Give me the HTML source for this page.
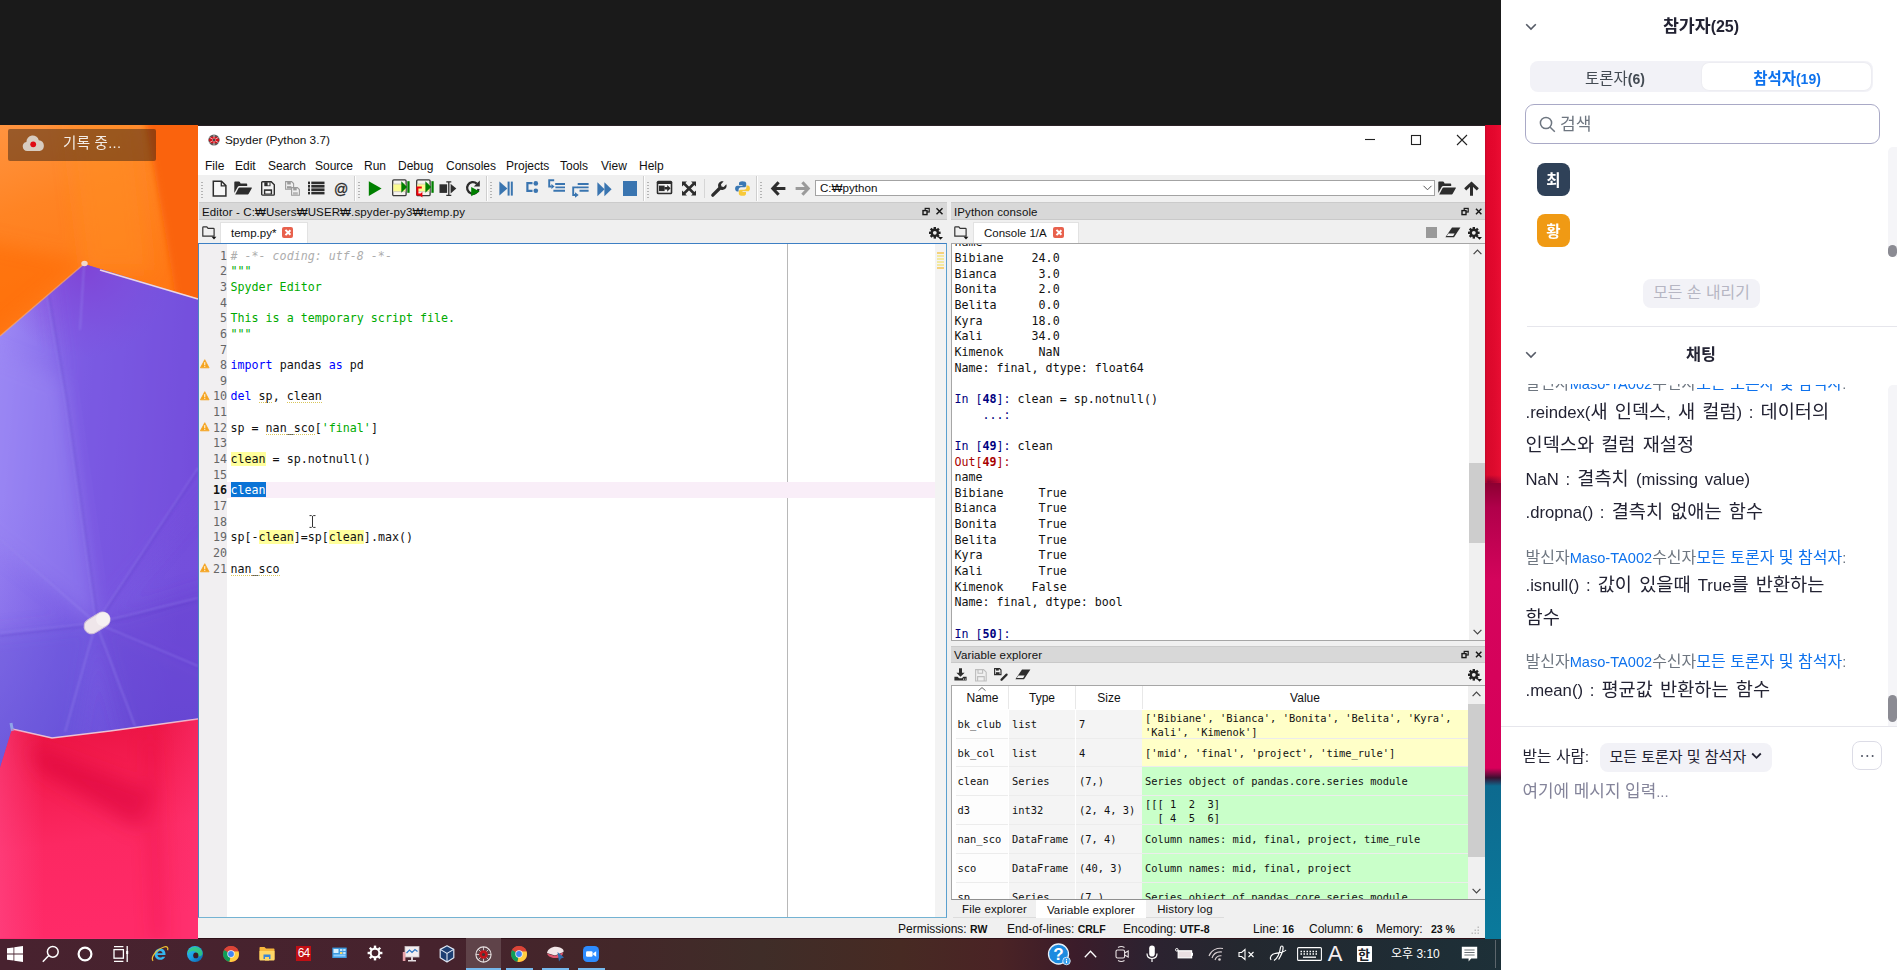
<!DOCTYPE html>
<html lang="ko">
<head>
<meta charset="utf-8">
<title>Spyder (Python 3.7)</title>
<style>
*{box-sizing:border-box;margin:0;padding:0}
html,body{width:1897px;height:970px;overflow:hidden;background:#fff}
body{position:relative;font-family:"Liberation Sans","Noto Sans CJK KR",sans-serif;font-size:12px;color:#111}
.abs{position:absolute}
#black{left:0;top:0;width:1501px;height:125px;background:#1a1a1a}
#desk{left:0;top:125px;width:1501px;height:814px;overflow:hidden;background:#e8134f}
#task{left:0;top:938px;width:1501px;height:32px;background:#42202b}
#spy{left:198px;top:125px;width:1287px;height:813px;border-top:1px solid #2b2226;background:#f0f0f0;overflow:hidden}
#zoom{left:1501px;top:0;width:396px;height:970px;background:#fff}
.mono{font-family:"DejaVu Sans Mono","Liberation Mono",monospace}

#spy .t{position:absolute;white-space:pre;line-height:1}
#titlebar{left:0;top:0;width:1287px;height:29px;background:#fff}
#menubar{left:0;top:29px;width:1287px;height:20px;background:#fff}
#menubar span{position:absolute;top:4px;font-size:12px;color:#111;line-height:14px}
#toolbar{left:0;top:49px;width:1287px;height:27px;background:#f0f0f0}
.hdl{position:absolute;top:6px;width:2px;height:17px;background-image:radial-gradient(circle,#b4b4b4 0.8px,transparent 1px);background-size:2px 3px}
.sep{position:absolute;top:1px;width:1px;height:25px;background:#cfcfcf;box-shadow:1px 0 0 #fff}
.ptitle{letter-spacing:.12px;position:absolute;height:18px;background:#d8d8d8;border-top:1px solid #cbcbcb;border-bottom:1px solid #c9c9c9;font-size:11.5px;line-height:18px;color:#111;white-space:pre;font-family:"Liberation Sans","NanumGothic","Noto Sans CJK KR",sans-serif}
.tabbar{position:absolute;height:23px;background:#f0f0f0}
.tab{position:absolute;top:2px;height:21px;background:#fff;border:1px solid #e2e2e2;border-bottom:none;font-size:11.5px;line-height:20px;white-space:pre;color:#111}
.cls{position:absolute;width:11px;height:11px;border-radius:2px;background:#e8614d}
.cls:before,.cls:after{content:"";position:absolute;left:5px;top:2px;width:1.6px;height:7px;background:#fff;transform:rotate(45deg)}
.cls:after{transform:rotate(-45deg)}
svg.i{position:absolute;overflow:visible}

#ed .ln{position:absolute;left:0;width:28px;text-align:right;font-size:11.67px;line-height:15.65px;color:#666;height:15.65px}
#ed .ln.cur{font-weight:bold;color:#111}
#ed .cl{position:absolute;left:31.5px;font-size:11.67px;line-height:15.65px;height:15.65px;white-space:pre;color:#111}
#ed i.cm{color:#adadad;font-style:italic}
#ed b{font-weight:normal}
#ed b.st{color:#00aa00}
#ed b.kw{color:#0000ff}
#ed u{text-decoration:none;background:linear-gradient(90deg,#d9c65a 50%,transparent 50%) 0 100%/2px 1px repeat-x}
#ed mark{background:#ffff9c;color:inherit}
#ed .sel{color:#fff}
#con .cc{position:absolute;left:2.400px;font-size:11.67px;line-height:15.65px;height:15.65px;white-space:pre;color:#111}
#con b{font-weight:normal}
#con b.ip{color:#000080}
#con b.op{color:#a80000}
#con b b{font-weight:bold}

#vt .vh{position:absolute;top:0;height:23px;line-height:25px;text-align:center;font-size:12px;color:#111}
#vt .vr{position:absolute;left:0;width:516px;height:28.83px}
#vt .vc{position:absolute;top:0;height:28.83px;line-height:28.83px;font-family:"DejaVu Sans Mono","Liberation Mono",monospace;font-size:10.4px;white-space:pre;padding-left:3px;color:#111;border-bottom:1px solid #ececec;overflow:hidden}
#vt .vc.two{line-height:14px;padding-top:1px}
.btab{position:absolute;height:16px;font-size:11.5px;line-height:16px;text-align:center;color:#111;white-space:pre;letter-spacing:.12px}
.btab.on{background:#fff;height:18px;line-height:20px}
#sb span{position:absolute;top:3px;font-size:12px;line-height:14px;white-space:pre;color:#111}
#sb b{font-size:10.500px;font-weight:bold}

#task svg{position:absolute;overflow:visible}
#task .ul{position:absolute;top:29.500px;height:2.500px;background:#76b9ed}

#zoom{font-family:"Liberation Sans","Noto Sans CJK KR",sans-serif;color:#232333}
#zoom .z{position:absolute;white-space:pre;line-height:1}
#zoom .hd{font-weight:bold;font-size:17.300px;color:#232333;text-align:center;width:200px}
#zoom .hd .la{font-size:16px}
#zoom .msg{font-size:18.640px;color:#232333;left:25.500px;word-spacing:2px;line-height:24px;height:24px}
#zoom .msg .la{font-size:16.700px}
#zoom .snd{font-size:16px;color:#6e7680;left:25.500px;line-height:20px;height:20px}
#zoom .snd .la{font-size:14.600px}
#zoom .snd b{font-weight:normal;color:#0e72ed}

</style>
</head>
<body>
<div id="black" class="abs"></div>
<div id="desk" class="abs"><svg class="abs" style="left:0;top:0" width="1501" height="814" viewBox="0 125 1501 814">
<defs>
<linearGradient id="gor" x1="0" y1="0" x2="0.300" y2="1"><stop offset="0" stop-color="#ff9440"/><stop offset="0.350" stop-color="#ff8424"/><stop offset="1" stop-color="#ff7410"/></linearGradient>
<linearGradient id="gpu" x1="0" y1="0" x2="1" y2="0.200"><stop offset="0" stop-color="#9e8af5"/><stop offset="0.450" stop-color="#8064e7"/><stop offset="1" stop-color="#744edb"/></linearGradient>
<linearGradient id="gpu2" x1="0" y1="0" x2="0" y2="1"><stop offset="0" stop-color="#7a5ae6" stop-opacity="0"/><stop offset="1" stop-color="#5a46d0" stop-opacity="0.550"/></linearGradient>
<radialGradient id="gvi" cx="84" cy="268" r="90" gradientUnits="userSpaceOnUse"><stop offset="0" stop-color="#8a34cc" stop-opacity=".85"/><stop offset="1" stop-color="#8a48da" stop-opacity="0"/></radialGradient>
<linearGradient id="grd" x1="0" y1="0" x2="0.150" y2="1"><stop offset="0" stop-color="#e81240"/><stop offset="0.300" stop-color="#f41c50"/><stop offset="0.600" stop-color="#fc2862"/><stop offset="1" stop-color="#ff2a68"/></linearGradient><linearGradient id="grl" x1="0" y1="0" x2="1" y2="0"><stop offset="0" stop-color="#ff4a88" stop-opacity=".55"/><stop offset="0.220" stop-color="#ff4a88" stop-opacity="0"/></linearGradient><linearGradient id="grr" x1="0" y1="0" x2="1" y2="0"><stop offset="0.780" stop-color="#ff3c7c" stop-opacity="0"/><stop offset="1" stop-color="#ff3c7c" stop-opacity=".4"/></linearGradient>
<linearGradient id="gst" x1="0" y1="0" x2="0" y2="1"><stop offset="0" stop-color="#e2062c"/><stop offset="0.430" stop-color="#d80a2c"/><stop offset="0.438" stop-color="#8a0030"/><stop offset="0.470" stop-color="#b0004a"/><stop offset="0.560" stop-color="#d4045c"/><stop offset="0.790" stop-color="#d8005a"/><stop offset="0.802" stop-color="#3a1030"/><stop offset="0.812" stop-color="#0d6a8f"/><stop offset="1" stop-color="#0a7a9c"/></linearGradient>
<linearGradient id="gsx" x1="0" y1="0" x2="1" y2="0"><stop offset="0" stop-color="#b00a2a" stop-opacity=".7"/><stop offset="0.180" stop-color="#e8062c" stop-opacity="0"/><stop offset="1" stop-color="#f5143a" stop-opacity=".5"/></linearGradient>
<filter id="bl" x="-50%" y="-50%" width="200%" height="200%"><feGaussianBlur stdDeviation="9"/></filter>
<filter id="bl2" x="-50%" y="-50%" width="200%" height="200%"><feGaussianBlur stdDeviation="1"/></filter>
<filter id="bl3" x="-50%" y="-50%" width="200%" height="200%"><feGaussianBlur stdDeviation="3"/></filter></defs>
<rect x="0" y="125" width="200" height="240" fill="url(#gor)"/>
<clipPath id="cor"><polygon points="0,125 200,125 200,299 84,264 0,336"/></clipPath><g clip-path="url(#cor)"><g filter="url(#bl3)"><path d="M134 60 C152 160 168 240 180 330 L280 330 L280 60z" fill="#fa6408"/></g><g filter="url(#bl)"><path d="M60 60 L128 60 L150 270 L84 270z" fill="#ff8e24" opacity=".5"/><path d="M-60 230 L84 262 L-60 380z" fill="#ff680a" opacity=".5"/></g></g>
<clipPath id="cpu"><polygon points="0,336 84,264 198,299 198,722 110,733 52,740 12,731 0,770"/></clipPath>
<polygon points="0,336 84,264 198,299 198,722 110,733 52,740 12,731 0,770" fill="url(#gpu)"/>
<g clip-path="url(#cpu)">
<rect x="0" y="250" width="200" height="160" fill="url(#gvi)"/>
<rect x="0" y="500" width="200" height="280" fill="url(#gpu2)"/>
<g filter="url(#bl)">
<polygon points="96,623 65,400 40,200 260,200 260,430" fill="#7650de" opacity=".45"/>
<polygon points="96,623 260,570 260,700" fill="#6040cc" opacity=".35"/>
<polygon points="96,623 260,700 260,800 140,800" fill="#5e3ecc" opacity=".4"/>
<polygon points="96,623 -60,500 -60,330 62,380" fill="#9a88f4" opacity=".45"/>
<polygon points="96,623 -60,640 -60,800 65,800" fill="#5e4cd4" opacity=".35"/>
</g>
<g stroke="#9a88f0" stroke-width="1.200" opacity=".6" fill="none" filter="url(#bl2)">
<path d="M96 623 L65 400 L47 296"/><path d="M84 266 L80 330"/><path d="M96 623 L198 468"/><path d="M96 623 L198 598"/><path d="M96 623 L198 666"/><path d="M96 623 L135 726"/><path d="M96 623 L65 732"/><path d="M96 623 L0 539"/><path d="M96 623 L0 633"/>
</g>
<g stroke="#5a3cc4" stroke-width="1.500" opacity=".35" fill="none" filter="url(#bl2)">
<path d="M98 623 L67 400 L49 296"/><path d="M97 625 L198 471"/><path d="M97 625 L198 601"/><path d="M96 625 L0 636"/>
</g>
</g>
<path d="M0 336 L84 264" stroke="#ffb070" stroke-width="1.500" fill="none" opacity=".6"/>
<path d="M100 270 L198 299" stroke="#f6e6e6" stroke-width="1.700" fill="none" opacity=".9"/>
<ellipse cx="84.500" cy="263.500" rx="3.200" ry="2.800" fill="#f0d8cc"/>
<polygon points="0,768 12,729 52,738 110,731 198,719 198,939 0,939" fill="url(#grd)"/>
<path d="M12 729 L52 738 L110 731 L198 719" stroke="#f4d2da" stroke-width="1.500" opacity="0.900" fill="none"/>
<path d="M11 723 L12.500 731" stroke="#8fa4e8" stroke-width="3"/>
<clipPath id="crd"><polygon points="0,768 12,729 52,738 110,731 198,719 198,939 0,939"/></clipPath><g clip-path="url(#crd)"><rect x="0" y="715" width="200" height="224" fill="url(#grl)"/><rect x="0" y="715" width="200" height="224" fill="url(#grr)"/><g filter="url(#bl)"><path d="M30 745 L150 790 L140 830 L40 770z" fill="#d80c38" opacity=".5"/><path d="M150 740 L158 939" stroke="#e0103e" stroke-width="6" opacity=".5" fill="none"/></g></g>
<g transform="rotate(-32 96 623)"><rect x="83" y="616" width="28" height="15" rx="7.500" fill="#efe6ea"/><rect x="83" y="616" width="28" height="15" rx="7.500" fill="none" stroke="#cdbcd8" stroke-width="1"/><circle cx="104" cy="623.500" r="7" fill="#f6f0f2"/></g>
<rect x="1485" y="125" width="16" height="814" fill="url(#gst)"/>
<rect x="1485" y="125" width="16" height="358" fill="url(#gsx)"/>
</svg>
<div class="abs" style="left:8px;top:4px;width:148px;height:32px;background:rgba(35,23,17,.46);border-radius:2px"></div>
<svg class="abs" style="left:21.500px;top:9px" width="23" height="18" viewBox="0 0 23 18"><path d="M5.200 17.000a4.600 4.600 0 0 1-.8-9.100A6.300 6.300 0 0 1 16.800 6.200 5.500 5.500 0 0 1 17.800 17.000z" fill="#d8ccc0"/><circle cx="11.200" cy="10.300" r="2.900" fill="#e00a14"/></svg>
<div class="abs" style="left:63px;top:10px;font-size:14.500px;line-height:16px;color:#f3ece6;letter-spacing:.3px;white-space:pre;font-family:'Liberation Sans','Noto Sans CJK KR',sans-serif">기록 중...</div>
</div>
<div id="spy" class="abs">
<div id="titlebar" class="abs">
<svg class="i" style="left:10px;top:7.500px" width="12" height="12" viewBox="0 0 12 12"><circle cx="6" cy="6" r="5.600" fill="#5c5c5c"/><polygon points=".5,6 3.100,2.700 8.900,2.700 11.500,6 8.900,9.300 3.100,9.300" fill="#d40f18"/><path d="M6 .6v10.800M1.400 3.300l9.200 5.400M10.600 3.300L1.400 8.700" stroke="#fff" stroke-width=".8" opacity=".8" fill="none"/><circle cx="6" cy="6" r="1.300" fill="#4a4a4a"/></svg>
<div class="t" style="left:27px;top:9px;font-size:11.8px;color:#111">Spyder (Python 3.7)</div>
<svg class="i" style="left:1166px;top:8px" width="110" height="14" viewBox="0 0 110 14" fill="none" stroke="#222" stroke-width="1.1"><path d="M1 5.500h10"/><rect x="47.500" y="1.500" width="9" height="9"/><path d="M93 1l10 10M103 1l-10 10"/></svg>
</div>
<div id="menubar" class="abs">
<span style="left:7px">File</span><span style="left:37px">Edit</span><span style="left:70px">Search</span><span style="left:117px">Source</span><span style="left:166px">Run</span><span style="left:200px">Debug</span><span style="left:248px">Consoles</span><span style="left:308px">Projects</span><span style="left:362px">Tools</span><span style="left:403px">View</span><span style="left:441px">Help</span>
</div>
<div id="toolbar" class="abs"><!--TOOLBAR--><div class="hdl" style="left:3px"></div>
<svg class="i" style="left:14px;top:5px" width="16" height="17" viewBox="0 0 16 17"><path d="M1.3 1.2h8.2l4.4 4.4v10.4H1.3z" fill="#f7f7f7" stroke="#2d2d2d" stroke-width="1.5" stroke-linejoin="miter"/><path d="M9.3 1.4v4.4h4.4" fill="none" stroke="#2d2d2d" stroke-width="1.3"/></svg>
<svg class="i" style="left:36px;top:6px" width="18" height="14" viewBox="0 0 18 14"><path d="M0.3 12V1.6c0-.6.4-1 1-1h3.6c.5 0 .9.2 1.1.6l.6 1.2h5.6c.6 0 1 .4 1 1v1.5H5.2c-.6 0-1.1.3-1.4.8z" fill="#2d2d2d"/><path d="M1.2 13.4l3.4-6.3c.2-.4.6-.6 1-.6h11.8c.4 0 .6.4.4.8l-3.1 5.5c-.2.4-.6.6-1 .6z" fill="#2d2d2d"/></svg>
<svg class="i" style="left:63px;top:6px" width="14" height="15" viewBox="0 0 14 15"><path d="M1.6.7h8.6l3.1 3.1v9.4c0 .5-.4.9-.9.9H1.6c-.5 0-.9-.4-.9-.9V1.600c0-.5.400-.9.900-.9z" fill="#f4f4f4" stroke="#2d2d2d" stroke-width="1.4"/><rect x="3.300" y="1.2" width="6.2" height="4.000" fill="#2d2d2d"/><rect x="6.600" y="1.6" width="1.900" height="2.800" fill="#f4f4f4"/><rect x="2.900" y="8.300" width="8.200" height="5.200" fill="#2d2d2d"/><rect x="4.300" y="9.900" width="5.400" height="2.600" fill="#f4f4f4"/></svg>
<svg class="i" style="left:87px;top:6px" width="15" height="15" viewBox="0 0 15 15"><g fill="#f0f0f0" stroke="#9b9b9b" stroke-width="1.1"><path d="M.6.600h6.000l2.000 2.000v5.600H.6z"/><path d="M6.600 6.600h5.800l2.000 2.000v5.700H6.600z"/></g><rect x="2.200" y=".9" width="3.600" height="2.600" fill="#9b9b9b"/><rect x="2.000" y="5.200" width="4.400" height="2.400" fill="#9b9b9b"/><rect x="8.200" y="6.900" width="3.500" height="2.500" fill="#9b9b9b"/><rect x="8.000" y="11.200" width="4.800" height="2.600" fill="#b5b5b5"/></svg>
<svg class="i" style="left:110px;top:6px" width="17" height="14" viewBox="0 0 17 14" fill="#2d2d2d"><rect x="0" y=".6" width="2.000" height="2.600"/><rect x="3.300" y=".6" width="13.200" height="2.600"/><rect x="0" y="4.000" width="2.000" height="2.600"/><rect x="3.300" y="4.000" width="13.200" height="2.600"/><rect x="0" y="7.400" width="2.000" height="2.600"/><rect x="3.300" y="7.400" width="13.200" height="2.600"/><rect x="0" y="10.800" width="2.000" height="2.600"/><rect x="3.300" y="10.800" width="13.200" height="2.600"/></svg>
<div class="abs" style="left:135.500px;top:4.500px;font-size:15.300px;line-height:17px;color:#2d2d2d;-webkit-text-stroke:.35px #2d2d2d;transform:scaleX(.92);transform-origin:0 0">@</div>
<div class="sep" style="left:156px"></div>
<div class="hdl" style="left:160px"></div>
<svg class="i" style="left:170px;top:6px" width="14" height="15" viewBox="0 0 14 15"><path d="M.8.300L13.600 7.600.8 14.900z" fill="#008000"/></svg>
<svg class="i" style="left:194px;top:4px" width="18" height="18" viewBox="0 0 18 18"><rect x=".7" y=".9" width="13.400" height="15.800" rx="1.200" fill="#f6f3f0" stroke="#3a3a3a" stroke-width="1.300"/><rect x="1.400" y="5.200" width="12.000" height="7.200" fill="#fbfb90"/><path d="M1.400 5.000h12.000M1.400 12.600h12.000" stroke="#c9c6b0" stroke-width=".8"/><path d="M9.300 2.200l5.800 5.800-5.800 5.800z" fill="#007f00"/><rect x="15.300" y="2.200" width="2.300" height="11.600" fill="#007f00"/></svg>
<svg class="i" style="left:217px;top:4px" width="20" height="19" viewBox="0 0 20 19"><rect x="1.700" y=".9" width="13.400" height="15.800" rx="1.200" fill="#f6f3f0" stroke="#3a3a3a" stroke-width="1.300"/><rect x="2.400" y="5.200" width="12.000" height="7.200" fill="#fbfb90"/><path d="M2.400 5.000h12.000M2.400 12.600h12.000" stroke="#c9c6b0" stroke-width=".8"/><path d="M10.400 2.200l5.800 5.800-5.800 5.800z" fill="#007f00"/><rect x="16.400" y="2.200" width="2.300" height="11.600" fill="#007f00"/><path d="M6.800 8.600H2.400v7.000h2.600" fill="none" stroke="#f0000a" stroke-width="2.000"/><path d="M7.400 13.000l-3.600 2.700 3.600 2.700z" fill="#f0000a"/></svg>
<svg class="i" style="left:241px;top:6px" width="18" height="15" viewBox="0 0 18 15"><rect x=".5" y="3.300" width="7.600" height="8.600" fill="#2d2d2d"/><path d="M11.600 2.800l5.700 4.800-5.700 4.800z" fill="#2d2d2d"/><path d="M7.300.8h5M7.300 14.300h5M9.800.8v13.500" stroke="#2d2d2d" stroke-width="1.300" fill="none"/></svg>
<svg class="i" style="left:267px;top:5px" width="16" height="17" viewBox="0 0 16 17"><path d="M11.800 3.600A5.800 5.800 0 1 0 13.600 9" fill="none" stroke="#2d2d2d" stroke-width="2.300"/><path d="M14.800.4v6.000H8.800z" fill="#2d2d2d"/><path d="M6.200 7.000l8.400 4.600-8.400 4.600z" fill="#008000"/></svg>
<div class="sep" style="left:288px"></div>
<div class="hdl" style="left:292px"></div>
<svg class="i" style="left:301px;top:6px" width="14" height="15" viewBox="0 0 14 15" fill="#3a75b0"><path d="M.4.600l8.000 7.000-8.000 7.000z"/><rect x="8.600" y=".6" width="2.000" height="14.000"/><rect x="11.800" y=".6" width="2.000" height="14.000"/></svg>
<svg class="i" style="left:328px;top:6px" width="13" height="13" viewBox="0 0 13 13"><path d="M6.500 2.200H1.400v7.600h5.100" fill="none" stroke="#3a75b0" stroke-width="2.200"/><circle cx="9.800" cy="2.400" r="2.300" fill="#3a75b0"/><circle cx="9.800" cy="9.800" r="2.300" fill="#3a75b0"/></svg>
<svg class="i" style="left:350px;top:4px" width="18" height="14" viewBox="0 0 18 14" fill="none" stroke="#3a75b0"><path d="M6.200 1.300H1.200v6.200h2.400" stroke-width="1.900"/><path d="M3.400 5.000l3.200 2.500-3.200 2.500z" fill="#3a75b0" stroke="none"/><path d="M7.200 5.000h9.800M7.400 8.400h9.600M5.400 11.750h11.600" stroke-width="1.900"/></svg>
<svg class="i" style="left:374px;top:8px" width="18" height="15" viewBox="0 0 18 15" fill="none" stroke="#3a75b0"><path d="M5.700 1.000h10.900M5.700 4.400h10.900M7.500 7.750h9.100" stroke-width="1.900"/><path d="M6.000 4.400H1.200v7.600h2.200" stroke-width="1.900"/><path d="M3.000 9.300l3.700 2.700-3.700 2.700z" fill="#3a75b0" stroke="none"/></svg>
<svg class="i" style="left:399px;top:7px" width="15" height="15" viewBox="0 0 15 15" fill="#3a75b0"><path d="M.4.300l7.200 7.000-7.200 7.000z"/><path d="M7.400.3l7.200 7.000-7.200 7.000z"/></svg>
<div class="abs" style="left:425px;top:6px;width:14px;height:15px;background:#3a75b0"></div>
<div class="sep" style="left:445px"></div>
<div class="hdl" style="left:449px"></div>
<svg class="i" style="left:457.500px;top:5px" width="17" height="15" viewBox="0 0 17 15"><rect x=".7" y=".7" width="15.600" height="13.600" rx="1.600" fill="#2d2d2d"/><rect x="2.300" y="4.000" width="12.400" height="8.700" fill="#f4f4f4"/><rect x="3.000" y="5.600" width="5.600" height="5.500" fill="#2d2d2d"/><path d="M8.400 7.100h2.800V4.900l3.400 3.450-3.400 3.450V9.600H8.400z" fill="#2d2d2d"/></svg>
<svg class="i" style="left:484px;top:6px" width="14" height="15" viewBox="0 0 14 15" fill="#2d2d2d"><path d="M0 .5h5.000L3.400 2.100l9.000 9.000L14 9.500v5.000H9.000l1.600-1.600-9.000-9.000L0 5.500z"/><path d="M14 .5v5.000l-1.600-1.600-9.000 9.000L5.000 14.500H0V9.500l1.600 1.600 9.000-9.000L9.000.5z"/></svg>
<div class="abs" style="left:506px;top:4px;width:1px;height:19px;background:#d6d6d6"></div>
<svg class="i" style="left:513px;top:6px" width="16" height="16" viewBox="0 0 16 16"><path d="M1.800 14.200L9.000 7.000" stroke="#2d2d2d" stroke-width="3.300" stroke-linecap="round"/><path d="M15.300 3.300l-2.600 2.600-2.200-.5-.5-2.200L12.600.6C10.900 0 9.000.5 7.900 1.900 6.900 3.200 6.800 5.000 7.600 6.400l2.000 2.000c1.400.8 3.200.7 4.500-.3 1.400-1.100 1.900-3.000 1.200-4.800z" fill="#2d2d2d"/></svg>
<svg class="i" style="left:537px;top:6px" width="15" height="15" viewBox="0 0 15 15"><path d="M7.300.2C4.800.2 4.000 1.200 4.000 2.300v1.800h3.500v.6H2.400C1.000 4.700.1 5.900.1 7.600s.8 2.900 2.100 2.900h1.400V8.600c0-1.300 1.100-2.300 2.400-2.300h3.400c1.000 0 1.800-.8 1.800-1.900V2.300c0-1.200-1.300-2.100-3.900-2.100z" fill="#3a78b4"/><path d="M7.700 14.800c2.500 0 3.300-1.000 3.300-2.100v-1.800H7.500v-.6h5.100c1.400 0 2.300-1.200 2.300-2.900s-.8-2.900-2.100-2.900h-1.400v1.900c0 1.300-1.100 2.300-2.400 2.300H5.600c-1.000 0-1.800.8-1.800 1.900v2.100c0 1.200 1.300 2.100 3.900 2.100z" fill="#f7c93a"/></svg>
<div class="sep" style="left:558px"></div>
<div class="hdl" style="left:562px"></div>
<svg class="i" style="left:573px;top:6px" width="15" height="15" viewBox="0 0 15 15"><path d="M7.600 1.200L1.800 7.500l5.800 6.300M2.200 7.500h12.200" fill="none" stroke="#2d2d2d" stroke-width="3.100" stroke-linejoin="miter"/></svg>
<svg class="i" style="left:597px;top:6px" width="15" height="15" viewBox="0 0 15 15"><path d="M7.400 1.200l5.800 6.300-5.800 6.300M12.800 7.500H.6" fill="none" stroke="#9a9a9a" stroke-width="3.100" stroke-linejoin="miter"/></svg>
<div class="abs" style="left:617px;top:5px;width:620px;height:16px;background:#fff;border:1px solid #a3a3a3;font-size:11.600px;line-height:14px;padding-left:4px;white-space:pre;color:#111;font-family:'Liberation Sans','NanumGothic',sans-serif">C:₩python</div>
<svg class="i" style="left:1225px;top:10px" width="9" height="6" viewBox="0 0 9 6"><path d="M.5.800l4.000 4.000 4.000-4.000" fill="none" stroke="#555" stroke-width="1"/></svg>
<svg class="i" style="left:1240px;top:6px" width="18" height="14" viewBox="0 0 18 14"><path d="M0.3 12V1.6c0-.6.4-1 1-1h3.600c.5 0 .9.200 1.100.6l.6 1.200h5.600c.6 0 1 .4 1 1v1.500H5.200c-.6 0-1.100.3-1.400.8z" fill="#2d2d2d"/><path d="M1.200 13.400l3.400-6.300c.2-.4.600-.6 1-.6h11.800c.4 0 .6.400.4.800l-3.100 5.500c-.2.400-.6.600-1 .6z" fill="#2d2d2d"/></svg>
<svg class="i" style="left:1265.500px;top:7px" width="15" height="14" viewBox="0 0 15 14"><path d="M1.200 7.400L7.500 1.500l6.300 5.900M7.500 2.200v11.600" fill="none" stroke="#2d2d2d" stroke-width="3.000"/></svg>
<!--/TOOLBAR--></div>
<!--PANES--><div class="ptitle" style="left:1px;top:76px;width:748px;padding-left:3px">Editor - C:₩Users₩USER₩.spyder-py3₩temp.py</div>
<svg class="i" style="left:723px;top:81px" width="24" height="9" viewBox="0 0 24 9" fill="none" stroke="#1a1a1a"><rect x="4.200" y="1.400" width="4.000" height="3.600" stroke-width="1.200"/><rect x="2.000" y="3.600" width="4.000" height="4.000" fill="#d8d8d8" stroke-width="1.400"/><path d="M15.500 1.300l6.000 6.000M21.500 1.300l-6.000 6.000" stroke-width="1.5"/></svg>
<div class="tabbar" style="left:1px;top:94px;width:748px"></div>
<svg class="i" style="left:4px;top:100px" width="15" height="14" viewBox="0 0 15 14"><path d="M.8 10.200V1.500c0-.4.3-.7.7-.7h3.300l1.300 1.500h5.300c.4 0 .7.300.7.700v7.200z" fill="none" stroke="#333" stroke-width="1.200"/><path d="M9.600 10.800h4.800l-2.400 2.600z" fill="#111"/></svg>
<div class="tab" style="left:22px;top:96px;width:88px;padding-left:10px">temp.py*</div>
<div class="cls" style="left:84px;top:101px"></div>
<svg class="i" style="left:731px;top:101px" width="14" height="13" viewBox="0 0 14 13"><g transform="translate(5.800 5.800)"><g fill="#222"><rect x="-1.200" y="-5.800" width="2.400" height="11.600"/><rect x="-1.200" y="-5.800" width="2.400" height="11.600" transform="rotate(45)"/><rect x="-1.200" y="-5.800" width="2.400" height="11.600" transform="rotate(90)"/><rect x="-1.200" y="-5.800" width="2.400" height="11.600" transform="rotate(135)"/><circle r="4.300"/></g><circle r="1.900" fill="#f0f0f0"/></g><path d="M9.000 10.000h5.000l-2.500 2.800z" fill="#111"/></svg>
<div id="ed" class="abs mono" style="left:0;top:117px;width:749px;height:675px;background:#fff;border:1px solid #5aa0cf;border-top-color:#3d7fc4;border-left-color:#4a86c0;border-bottom-color:#74b3d3">
<div class="abs" style="left:0;top:0;width:28px;height:673px;background:#f1eff1"></div>
<div class="abs" style="left:588px;top:0;width:1px;height:673px;background:#b8b8b8"></div>
<div class="abs" style="left:736px;top:0;width:11px;height:673px;background:#f3f3f3"></div>
<div class="abs" style="left:738px;top:8px;width:7px;height:2px;background:#f5d27a"></div>
<div class="abs" style="left:738px;top:11px;width:7px;height:2px;background:#f3e9a0"></div>
<div class="abs" style="left:738px;top:14px;width:7px;height:2px;background:#f3e9a0"></div>
<div class="abs" style="left:738px;top:17px;width:7px;height:2px;background:#f3e9a0"></div>
<div class="abs" style="left:738px;top:20px;width:7px;height:2px;background:#f3e9a0"></div>
<div class="abs" style="left:738px;top:23px;width:7px;height:2px;background:#f5d27a"></div>
<div class="ln" style="top:4.60px">1</div>
<div class="cl" style="top:4.60px"><i class="cm"># -*- coding: utf-8 -*-</i></div>
<div class="ln" style="top:20.25px">2</div>
<div class="cl" style="top:20.25px"><b class="st">"""</b></div>
<div class="ln" style="top:35.90px">3</div>
<div class="cl" style="top:35.90px"><b class="st">Spyder Editor</b></div>
<div class="ln" style="top:51.55px">4</div>
<div class="ln" style="top:67.20px">5</div>
<div class="cl" style="top:67.20px"><b class="st">This is a temporary script file.</b></div>
<div class="ln" style="top:82.85px">6</div>
<div class="cl" style="top:82.85px"><b class="st">"""</b></div>
<div class="ln" style="top:98.50px">7</div>
<div class="ln" style="top:114.15px">8</div>
<svg class="i" style="left:.8px;top:115.45px" width="9.500" height="9.500" viewBox="0 0 10 10"><path d="M5.000.700L9.600 9.300H.4z" fill="#f5a31e" stroke="#f5a31e" stroke-width=".8" stroke-linejoin="round"/><rect x="4.400" y="3.300" width="1.200" height="3.200" fill="#fff6dd"/><rect x="4.400" y="7.200" width="1.200" height="1.100" fill="#fff6dd"/></svg>
<div class="cl" style="top:114.15px"><b class="kw">import</b> pandas <b class="kw">as</b> pd</div>
<div class="ln" style="top:129.80px">9</div>
<div class="ln" style="top:145.45px">10</div>
<svg class="i" style="left:.8px;top:146.75px" width="9.500" height="9.500" viewBox="0 0 10 10"><path d="M5.000.700L9.600 9.300H.4z" fill="#f5a31e" stroke="#f5a31e" stroke-width=".8" stroke-linejoin="round"/><rect x="4.400" y="3.300" width="1.200" height="3.200" fill="#fff6dd"/><rect x="4.400" y="7.200" width="1.200" height="1.100" fill="#fff6dd"/></svg>
<div class="cl" style="top:145.45px"><b class="kw">del</b> <u>sp</u>, <u>clean</u></div>
<div class="ln" style="top:161.10px">11</div>
<div class="ln" style="top:176.75px">12</div>
<svg class="i" style="left:.8px;top:178.05px" width="9.500" height="9.500" viewBox="0 0 10 10"><path d="M5.000.700L9.600 9.300H.4z" fill="#f5a31e" stroke="#f5a31e" stroke-width=".8" stroke-linejoin="round"/><rect x="4.400" y="3.300" width="1.200" height="3.200" fill="#fff6dd"/><rect x="4.400" y="7.200" width="1.200" height="1.100" fill="#fff6dd"/></svg>
<div class="cl" style="top:176.75px">sp = <u>nan_sco</u>[<b class="st">'final'</b>]</div>
<div class="ln" style="top:192.40px">13</div>
<div class="ln" style="top:208.05px">14</div>
<div class="cl" style="top:208.05px"><mark>clean</mark> = sp.notnull()</div>
<div class="ln" style="top:223.70px">15</div>
<div class="abs" style="left:28px;top:238.15px;width:708px;height:15.65px;background:#f9eef8"></div>
<div class="abs" style="left:31.5px;top:238.15px;width:35.2px;height:15.3px;background:#0a73d6"></div>
<div class="ln cur" style="top:239.35px">16</div>
<div class="cl" style="top:239.35px"><span class="sel">clean</span></div>
<div class="ln" style="top:255.00px">17</div>
<div class="ln" style="top:270.65px">18</div>
<div class="ln" style="top:286.30px">19</div>
<div class="cl" style="top:286.30px">sp[-<mark>clean</mark>]=sp[<mark>clean</mark>].max()</div>
<div class="ln" style="top:301.95px">20</div>
<div class="ln" style="top:317.60px">21</div>
<svg class="i" style="left:.8px;top:318.90px" width="9.500" height="9.500" viewBox="0 0 10 10"><path d="M5.000.700L9.600 9.300H.4z" fill="#f5a31e" stroke="#f5a31e" stroke-width=".8" stroke-linejoin="round"/><rect x="4.400" y="3.300" width="1.200" height="3.200" fill="#fff6dd"/><rect x="4.400" y="7.200" width="1.200" height="1.100" fill="#fff6dd"/></svg>
<div class="cl" style="top:317.60px"><u>nan_sco</u></div>
<svg class="i" style="left:109.500px;top:271px" width="7" height="13" viewBox="0 0 7 13"><path d="M.5.600h2.200M4.200.600h2.300M3.500.900v11.200M.5 12.400h2.200M4.200 12.400h2.300" stroke="#333" stroke-width="1" fill="none"/></svg>
</div>
<div class="ptitle" style="left:753px;top:76px;width:534px;padding-left:3px">IPython console</div>
<svg class="i" style="left:1262px;top:81px" width="24" height="9" viewBox="0 0 24 9" fill="none" stroke="#1a1a1a"><rect x="4.200" y="1.400" width="4.000" height="3.600" stroke-width="1.200"/><rect x="2.000" y="3.600" width="4.000" height="4.000" fill="#d8d8d8" stroke-width="1.400"/><path d="M16.000 1.800l5.400 5.400M21.400 1.800l-5.400 5.400" stroke-width="1.500"/></svg>
<div class="tabbar" style="left:753px;top:94px;width:534px"></div>
<svg class="i" style="left:756px;top:100px" width="15" height="14" viewBox="0 0 15 14"><path d="M.8 10.200V1.500c0-.4.3-.7.7-.7h3.300l1.300 1.500h5.300c.4 0 .7.300.7.700v7.200z" fill="none" stroke="#333" stroke-width="1.200"/><path d="M9.600 10.800h4.800l-2.400 2.600z" fill="#111"/></svg>
<div class="tab" style="left:775px;top:96px;width:106px;padding-left:10px">Console 1/A</div>
<div class="cls" style="left:855px;top:101px"></div>
<div class="abs" style="left:1228px;top:101px;width:11px;height:11px;background:#999"></div>
<svg class="i" style="left:1247px;top:101px" width="16" height="11" viewBox="0 0 16 11"><path d="M7.000.500h8.400L9.000 10.200H.4z" fill="#2d2d2d"/><path d="M3.400 6.600h6.200l-1.500 2.500H1.800z" fill="#f0f0f0"/></svg>
<svg class="i" style="left:1270px;top:101px" width="14" height="13" viewBox="0 0 14 13"><g transform="translate(5.800 5.800)"><g fill="#222"><rect x="-1.200" y="-5.800" width="2.400" height="11.600"/><rect x="-1.200" y="-5.800" width="2.400" height="11.600" transform="rotate(45)"/><rect x="-1.200" y="-5.800" width="2.400" height="11.600" transform="rotate(90)"/><rect x="-1.200" y="-5.800" width="2.400" height="11.600" transform="rotate(135)"/><circle r="4.300"/></g><circle r="1.900" fill="#f0f0f0"/></g><path d="M9.000 10.000h5.000l-2.500 2.800z" fill="#111"/></svg>
<div id="con" class="abs mono" style="left:753px;top:117px;width:534px;height:398px;background:#fff;border:1px solid #a6a6a6;border-right:none;overflow:hidden">
<div class="cc" style="top:-8.60px">name</div>
<div class="cc" style="top:7.05px">Bibiane    24.0</div>
<div class="cc" style="top:22.70px">Bianca      3.0</div>
<div class="cc" style="top:38.35px">Bonita      2.0</div>
<div class="cc" style="top:54.00px">Belita      0.0</div>
<div class="cc" style="top:69.65px">Kyra       18.0</div>
<div class="cc" style="top:85.30px">Kali       34.0</div>
<div class="cc" style="top:100.95px">Kimenok     NaN</div>
<div class="cc" style="top:116.60px">Name: final, dtype: float64</div>
<div class="cc" style="top:147.90px"><b class="ip">In [<b>48</b>]:</b> clean = sp.notnull()</div>
<div class="cc" style="top:163.55px"><b class="ip">    ...:</b> </div>
<div class="cc" style="top:194.85px"><b class="ip">In [<b>49</b>]:</b> clean</div>
<div class="cc" style="top:210.50px"><b class="op">Out[<b>49</b>]:</b> </div>
<div class="cc" style="top:226.15px">name</div>
<div class="cc" style="top:241.80px">Bibiane     True</div>
<div class="cc" style="top:257.45px">Bianca      True</div>
<div class="cc" style="top:273.10px">Bonita      True</div>
<div class="cc" style="top:288.75px">Belita      True</div>
<div class="cc" style="top:304.40px">Kyra        True</div>
<div class="cc" style="top:320.05px">Kali        True</div>
<div class="cc" style="top:335.70px">Kimenok    False</div>
<div class="cc" style="top:351.35px">Name: final, dtype: bool</div>
<div class="cc" style="top:382.65px"><b class="ip">In [<b>50</b>]:</b> </div>
<div class="abs" style="left:517px;top:0;width:16px;height:396px;background:#f0f0f0"></div>
<div class="abs" style="left:517px;top:219px;width:16px;height:80px;background:#cdcdcd"></div>
<svg class="i" style="left:521px;top:5px" width="9" height="6" viewBox="0 0 9 6"><path d="M.6 5.200l3.900-4.000 3.900 4.000" fill="none" stroke="#444" stroke-width="1.200"/></svg>
<svg class="i" style="left:521px;top:385px" width="9" height="6" viewBox="0 0 9 6"><path d="M.6.800l3.900 4.000 3.900-4.000" fill="none" stroke="#444" stroke-width="1.200"/></svg>
</div><div class="ptitle" style="left:753px;top:520px;width:534px;height:17px;line-height:16px;padding-left:3px">Variable explorer</div>
<svg class="i" style="left:1262px;top:524px" width="24" height="9" viewBox="0 0 24 9" fill="none" stroke="#1a1a1a"><rect x="4.200" y="1.400" width="4.000" height="3.600" stroke-width="1.200"/><rect x="2.000" y="3.600" width="4.000" height="4.000" fill="#d8d8d8" stroke-width="1.400"/><path d="M16.000 1.800l5.400 5.400M21.400 1.800l-5.400 5.400" stroke-width="1.500"/></svg>
<svg class="i" style="left:756px;top:542px" width="13" height="13" viewBox="0 0 13 13" fill="#2d2d2d"><path d="M5.000.300h3.000v4.400h2.600L6.500 8.800 2.400 4.700h2.600z"/><path d="M.4 8.800h3.200l1.500 1.500h2.800l1.500-1.500h3.200v3.600H.4z"/><rect x="9.000" y="10.600" width="1.000" height="1.000" fill="#f0f0f0"/><rect x="10.800" y="10.600" width="1.000" height="1.000" fill="#f0f0f0"/></svg>
<svg class="i" style="left:777px;top:543px" width="12" height="13" viewBox="0 0 12 13" fill="none" stroke="#bdbdbd" stroke-width="1.100"><path d="M.6.600h8.000l2.600 2.600v8.800H.6z"/><path d="M3.000.800v3.400h4.600V.8M2.600 12.000V7.600h6.600v4.400"/></svg>
<svg class="i" style="left:796px;top:542px" width="15" height="13" viewBox="0 0 15 13"><path d="M.6.600h5.000l1.400 1.400v4.600H.6z" fill="none" stroke="#2d2d2d" stroke-width="1.100"/><rect x="2.000" y=".8" width="2.800" height="1.800" fill="#2d2d2d"/><rect x="1.800" y="4.200" width="3.800" height="2.000" fill="#2d2d2d"/><path d="M7.600 11.600l5.000-5.000" stroke="#2d2d2d" stroke-width="2.200" stroke-linecap="round"/><path d="M6.600 12.600l.4-1.600 1.200 1.200z" fill="#2d2d2d"/></svg>
<svg class="i" style="left:817px;top:543px" width="16" height="11" viewBox="0 0 16 11"><path d="M7.000.500h8.400L9.000 10.200H.4z" fill="#2d2d2d"/><path d="M3.400 6.600h6.200l-1.500 2.500H1.800z" fill="#f0f0f0"/></svg>
<svg class="i" style="left:1270px;top:543px" width="14" height="13" viewBox="0 0 14 13"><g transform="translate(5.800 5.800)"><g fill="#222"><rect x="-1.200" y="-5.800" width="2.400" height="11.600"/><rect x="-1.200" y="-5.800" width="2.400" height="11.600" transform="rotate(45)"/><rect x="-1.200" y="-5.800" width="2.400" height="11.600" transform="rotate(90)"/><rect x="-1.200" y="-5.800" width="2.400" height="11.600" transform="rotate(135)"/><circle r="4.300"/></g><circle r="1.900" fill="#f0f0f0"/></g><path d="M9.000 10.000h5.000l-2.500 2.800z" fill="#111"/></svg>
<div id="vt" class="abs" style="left:753px;top:559px;width:534px;height:215px;background:#fff;border:1px solid #a6a6a6;border-right:none;border-bottom-color:#8f8f8f;overflow:hidden">
<div class="abs" style="left:0;top:0;width:516px;height:23px;background:#fff"></div>
<div class="vh" style="left:4px;width:53px">Name</div>
<div class="vh" style="left:57px;width:66px">Type</div>
<div class="vh" style="left:124px;width:66px">Size</div>
<div class="vh" style="left:190px;width:326px">Value</div>
<svg class="i" style="left:26px;top:1px" width="8" height="4" viewBox="0 0 8 4"><path d="M.5 3.600l3.500-3.000 3.500 3.000" fill="none" stroke="#555" stroke-width=".9"/></svg>
<div class="abs" style="left:56px;top:0;width:1px;height:23px;background:#e8e8e8"></div>
<div class="abs" style="left:123px;top:0;width:1px;height:23px;background:#e8e8e8"></div>
<div class="abs" style="left:190px;top:0;width:1px;height:23px;background:#e8e8e8"></div>
<div class="vr" style="top:23.70px">
<div class="vc" style="left:4px;width:52px;background:#fdfdfd;padding-left:1.500px">bk_club</div>
<div class="vc" style="left:57px;width:66px;background:#f4f4f4">list</div>
<div class="vc" style="left:124px;width:66px;background:#f4f4f4">7</div>
<div class="vc two" style="left:190px;width:326px;background:#ffffc8">['Bibiane', 'Bianca', 'Bonita', 'Belita', 'Kyra',
'Kali', 'Kimenok']</div>
</div>
<div class="vr" style="top:52.53px">
<div class="vc" style="left:4px;width:52px;background:#fdfdfd;padding-left:1.500px">bk_col</div>
<div class="vc" style="left:57px;width:66px;background:#f4f4f4">list</div>
<div class="vc" style="left:124px;width:66px;background:#f4f4f4">4</div>
<div class="vc" style="left:190px;width:326px;background:#ffffc8">['mid', 'final', 'project', 'time_rule']</div>
</div>
<div class="vr" style="top:81.36px">
<div class="vc" style="left:4px;width:52px;background:#fdfdfd;padding-left:1.500px">clean</div>
<div class="vc" style="left:57px;width:66px;background:#f4f4f4">Series</div>
<div class="vc" style="left:124px;width:66px;background:#f4f4f4">(7,)</div>
<div class="vc" style="left:190px;width:326px;background:#c9ffc9">Series object of pandas.core.series module</div>
</div>
<div class="vr" style="top:110.19px">
<div class="vc" style="left:4px;width:52px;background:#fdfdfd;padding-left:1.500px">d3</div>
<div class="vc" style="left:57px;width:66px;background:#f4f4f4">int32</div>
<div class="vc" style="left:124px;width:66px;background:#f4f4f4">(2, 4, 3)</div>
<div class="vc two" style="left:190px;width:326px;background:#c9ffc9">[[[ 1  2  3]
  [ 4  5  6]</div>
</div>
<div class="vr" style="top:139.02px">
<div class="vc" style="left:4px;width:52px;background:#fdfdfd;padding-left:1.500px">nan_sco</div>
<div class="vc" style="left:57px;width:66px;background:#f4f4f4">DataFrame</div>
<div class="vc" style="left:124px;width:66px;background:#f4f4f4">(7, 4)</div>
<div class="vc" style="left:190px;width:326px;background:#c9ffc9">Column names: mid, final, project, time_rule</div>
</div>
<div class="vr" style="top:167.85px">
<div class="vc" style="left:4px;width:52px;background:#fdfdfd;padding-left:1.500px">sco</div>
<div class="vc" style="left:57px;width:66px;background:#f4f4f4">DataFrame</div>
<div class="vc" style="left:124px;width:66px;background:#f4f4f4">(40, 3)</div>
<div class="vc" style="left:190px;width:326px;background:#c9ffc9">Column names: mid, final, project</div>
</div>
<div class="vr" style="top:196.68px">
<div class="vc" style="left:4px;width:52px;background:#fdfdfd;padding-left:1.500px">sp</div>
<div class="vc" style="left:57px;width:66px;background:#f4f4f4">Series</div>
<div class="vc" style="left:124px;width:66px;background:#f4f4f4">(7,)</div>
<div class="vc" style="left:190px;width:326px;background:#c9ffc9">Series object of pandas.core.series module</div>
</div>
<div class="abs" style="left:516px;top:0;width:17px;height:213px;background:#f0f0f0"></div>
<div class="abs" style="left:516px;top:18px;width:17px;height:153px;background:#cdcdcd"></div>
<svg class="i" style="left:520px;top:5px" width="9" height="6" viewBox="0 0 9 6"><path d="M.6 5.200l3.900-4.000 3.900 4.000" fill="none" stroke="#444" stroke-width="1.200"/></svg>
<svg class="i" style="left:520px;top:202px" width="9" height="6" viewBox="0 0 9 6"><path d="M.6.800l3.900 4.000 3.900-4.000" fill="none" stroke="#444" stroke-width="1.200"/></svg>
</div>
<div class="btab" style="left:755px;top:775px;width:83px">File explorer</div>
<div class="btab on" style="left:838px;top:774px;width:110px">Variable explorer</div>
<div class="btab" style="left:948px;top:775px;width:78px">History log</div>
<div class="abs" style="left:755px;top:791px;width:83px;height:1px;background:#dcdcdc"></div><div class="abs" style="left:948px;top:791px;width:78px;height:1px;background:#dcdcdc"></div>
<div id="sb" class="abs" style="left:0;top:793px;width:1287px;height:19px">
<span style="left:700px">Permissions: <b>RW</b></span>
<span style="left:809px">End-of-lines: <b>CRLF</b></span>
<span style="left:925px">Encoding: <b>UTF-8</b></span>
<span style="left:1055px">Line: <b>16</b></span>
<span style="left:1111px">Column: <b>6</b></span>
<span style="left:1178px">Memory: <b style="margin-left:5px">23 %</b></span>
<svg class="i" style="left:1272px;top:6px" width="10" height="10" viewBox="0 0 10 10" fill="#bdbdbd"><rect x="7.500" y="1.500" width="1.500" height="1.500"/><rect x="4.500" y="4.500" width="1.500" height="1.500"/><rect x="7.500" y="4.500" width="1.500" height="1.500"/><rect x="1.500" y="7.500" width="1.500" height="1.500"/><rect x="4.500" y="7.500" width="1.500" height="1.500"/><rect x="7.500" y="7.500" width="1.500" height="1.500"/></svg>
</div><!--PANES_END-->
</div>
<div id="task" class="abs">
<div class="abs" style="left:0;top:0;width:1501px;height:32px;background:linear-gradient(90deg,#48222f 0px,#46232d 450px,#432729 620px,#3f2d28 760px,#472a23 900px,#4a2325 1000px,#3b1c2a 1075px,#2c2230 1150px,#23282f 1250px,#1f2c34 1400px,#1d3038 1501px)"></div>
<div class="abs" style="left:0;top:0;width:198px;height:1px;background:#ff2d74"></div><div class="abs" style="left:198px;top:0;width:1287px;height:1px;background:#2e1119"></div><div class="abs" style="left:1485px;top:0;width:16px;height:1px;background:#0a7a9c"></div>
<div class="abs" style="left:466px;top:0;width:35px;height:32px;background:#5f4349"></div>
<div class="ul" style="left:466px;width:35px"></div><div class="ul" style="left:506px;width:27px"></div><div class="ul" style="left:542px;width:27px"></div><div class="ul" style="left:578px;width:27px"></div>
<!-- windows -->
<svg style="left:7px;top:8px" width="16" height="16" viewBox="0 0 16 16" fill="#fff"><path d="M0 2.300l6.500-.9v6.200H0zM7.300 1.300L16 0v7.600H7.300zM0 8.400h6.500v6.200L0 13.700zM7.300 8.400H16V16l-8.700-1.300z"/></svg>
<!-- search -->
<svg style="left:42px;top:7px" width="18" height="18" viewBox="0 0 18 18" fill="none" stroke="#fff" stroke-width="1.500"><circle cx="10.800" cy="6.800" r="5.400"/><path d="M6.800 10.600L.8 16.800"/></svg>
<!-- cortana -->
<svg style="left:77px;top:8px" width="16" height="16" viewBox="0 0 16 16" fill="none" stroke="#fff" stroke-width="2.200"><circle cx="8" cy="8" r="6.400"/></svg>
<!-- task view -->
<svg style="left:113px;top:8px" width="17" height="16" viewBox="0 0 17 16" fill="none" stroke="#fff" stroke-width="1.300"><rect x="1" y="3.600" width="9.400" height="8.600"/><path d="M1 .7h9.400M1 15.300h9.400M14.200 0v16"/><rect x="13.200" y="5.000" width="2.000" height="3.000" fill="#fff" stroke="none"/></svg>
<!-- IE -->
<svg style="left:151px;top:7px" width="18" height="18" viewBox="0 0 18 18"><path d="M9.200 3.600c-3.200 0-5.600 2.300-5.600 5.600s2.400 5.600 5.600 5.600c2.300 0 4.100-1.200 5.000-3.100h-3.000c-.5.600-1.200.9-2.000.9-1.500 0-2.600-1.000-2.700-2.500h8.000c.3-3.800-1.900-6.500-5.300-6.500zm-2.700 4.600c.2-1.300 1.200-2.300 2.600-2.300s2.400 1.000 2.500 2.300z" fill="#35b6ee"/><path d="M2.000 15.800C-.5 12.500 5.000 4.500 13.000 2.000c3.000-.9 4.600.4 3.600 3.200" fill="none" stroke="#f4c430" stroke-width="1.200"/></svg>
<!-- edge -->
<svg style="left:187px;top:8px" width="16" height="16" viewBox="0 0 16 16"><defs><linearGradient id="edg" x1="0" y1="0" x2="1" y2="1"><stop offset="0" stop-color="#35c1f1"/><stop offset=".5" stop-color="#1b9de2"/><stop offset="1" stop-color="#0c59a4"/></linearGradient></defs><circle cx="8" cy="8" r="8" fill="url(#edg)"/><path d="M1.000 5.500C3.000 1.000 9.000-.5 13.000 2.500c2.500 2.000 3.000 5.000 2.000 6.500-1.500 2.000-5.000 1.500-5.000-.5 0-2.500-3.500-4.500-6.500-3.000-1.300.6-2.500 2.000-2.500 3.500z" fill="#37d16f" opacity=".75"/><ellipse cx="8.800" cy="9.400" rx="2.600" ry="2.900" fill="#3b1a26"/></svg>
<!-- chrome -->
<svg style="left:223px;top:8px" width="16" height="16" viewBox="0 0 16 16"><circle cx="8" cy="8" r="8" fill="#db4437"/><path d="M8 8L1.100 4.000A8 8 0 0 0 6.500 15.900z" fill="#0f9d58"/><path d="M8 8l-1.500 7.900A8 8 0 0 0 15.500 5.200H8z" fill="#ffcd40"/><path d="M1.100 4.000A8 8 0 0 1 15.500 5.200H8z" fill="#db4437"/><circle cx="8" cy="8" r="3.700" fill="#f1f1f1"/><circle cx="8" cy="8" r="2.900" fill="#4285f4"/></svg>
<!-- folder -->
<svg style="left:259px;top:8px" width="16" height="15" viewBox="0 0 16 15"><path d="M.5 2.000c0-.6.400-1.000 1.000-1.000h4.000l1.500 1.600h7.500c.6 0 1.000.4 1.000 1.000V13.500H.5z" fill="#f6b73c"/><path d="M.5 5.000h15.000v8.500c0 .6-.4 1.000-1.000 1.000h-13.000c-.6 0-1.000-.4-1.000-1.000z" fill="#ffd767"/><rect x="4.500" y="8.500" width="7.000" height="4.500" fill="#3b86d6"/><rect x="6.000" y="11.000" width="4.000" height="3.500" fill="#ffd767"/></svg>
<!-- 64 -->
<div class="abs" style="left:296px;top:8px;width:15px;height:15px;background:#c00f14;color:#fff;font-size:12px;line-height:15px;text-align:center;letter-spacing:-1px;font-family:'Liberation Sans',sans-serif">64</div>
<!-- blue app -->
<svg style="left:332px;top:9px" width="15" height="12" viewBox="0 0 15 12"><rect x=".3" y=".6" width="14.400" height="10.400" fill="#3d9be0"/><rect x="1.500" y="2.000" width="5.000" height="4.000" fill="#d6f0ff"/><rect x="8.000" y="2.000" width="2.400" height="2.000" fill="#bfe4ff"/><rect x="11.200" y="2.000" width="2.400" height="2.000" fill="#bfe4ff"/><rect x="8.000" y="5.000" width="2.400" height="2.000" fill="#f6d56a"/><rect x="11.200" y="5.000" width="2.400" height="2.000" fill="#bfe4ff"/><rect x="1.500" y="7.500" width="12.000" height="2.000" fill="#8fd0ff"/></svg>
<!-- gear -->
<svg style="left:367px;top:7px" width="16" height="16" viewBox="0 0 16 16"><g transform="translate(8 8)" fill="#fff"><rect x="-1.200" y="-7.400" width="2.400" height="14.800"/><rect x="-1.200" y="-7.400" width="2.400" height="14.800" transform="rotate(45)"/><rect x="-1.200" y="-7.400" width="2.400" height="14.800" transform="rotate(90)"/><rect x="-1.200" y="-7.400" width="2.400" height="14.800" transform="rotate(135)"/><circle r="5.400"/></g><circle cx="8" cy="8" r="3.300" fill="#46232d"/></svg>
<!-- monitor -->
<svg style="left:402px;top:7px" width="18" height="18" viewBox="0 0 18 18"><rect x="3.000" y="1.500" width="14.000" height="10.500" fill="#f3eef0" stroke="#c9c0c4" stroke-width=".8"/><path d="M4.500 8.000l3.000-3.000 2.500 2.500 3.000-3.000 2.500 2.000" fill="none" stroke="#2f78c4" stroke-width="1.200"/><rect x="9.000" y="12.000" width="2.000" height="3.000" fill="#d8d0d4"/><rect x="6.000" y="15.000" width="8.000" height="1.500" fill="#e5dfe2"/><rect x=".8" y="7.000" width="2.600" height="9.000" fill="#e8a0a8"/></svg>
<!-- virtualbox cube -->
<svg style="left:439px;top:7px" width="16" height="18" viewBox="0 0 16 18"><path d="M8 .8l6.800 3.600v8.400L8 17.000 1.200 12.800V4.400z" fill="#1d3f73" stroke="#dfe8f5" stroke-width="1.200" stroke-linejoin="round"/><path d="M1.200 4.400L8 8.400l6.800-4.000M8 8.400v8.600" stroke="#dfe8f5" stroke-width="1.100" fill="none"/></svg>
<!-- spyder -->
<svg style="left:475px;top:8px" width="17" height="17" viewBox="0 0 17 17"><circle cx="8.500" cy="8.500" r="7.600" fill="none" stroke="#e8e2e2" stroke-width="1.100"/><path d="M8.500 1.000v15.000M1.000 8.500h15.000M3.200 3.200l10.600 10.600M13.800 3.200L3.200 13.800" stroke="#e8e2e2" stroke-width=".8"/><circle cx="8.500" cy="8.500" r="4.300" fill="#c2161c"/><circle cx="8.500" cy="8.500" r="1.600" fill="#3a3a3a"/></svg>
<!-- chrome 2 -->
<svg style="left:511px;top:8px" width="16" height="16" viewBox="0 0 16 16"><circle cx="8" cy="8" r="8" fill="#db4437"/><path d="M8 8L1.100 4.000A8 8 0 0 0 6.500 15.900z" fill="#0f9d58"/><path d="M8 8l-1.500 7.900A8 8 0 0 0 15.500 5.200H8z" fill="#ffcd40"/><path d="M1.100 4.000A8 8 0 0 1 15.500 5.200H8z" fill="#db4437"/><circle cx="8" cy="8" r="3.700" fill="#f1f1f1"/><circle cx="8" cy="8" r="2.900" fill="#4285f4"/></svg>
<!-- pink app -->
<svg style="left:546px;top:7px" width="19" height="18" viewBox="0 0 19 18"><path d="M1.000 8.000C2.000 3.000 8.000.5 14.000 2.500c3.000 1.000 4.000 3.000 3.500 4.500L9.000 10.500z" fill="#f2e6e8"/><path d="M1.000 8.500l8.000 2.500 8.000-3.500c0 2.500-2.000 5.000-6.000 5.500-5.000.5-9.000-1.500-10.000-4.500z" fill="#e0566f"/><path d="M11.500 7.000l1.500 9.500 2.000-3.000 3.000-1.000z" fill="#2f6fb0"/></svg>
<!-- zoom -->
<svg style="left:583px;top:8px" width="16" height="16" viewBox="0 0 16 16"><rect width="16" height="16" rx="4.500" fill="#2d8cff"/><rect x="3.000" y="5.200" width="6.600" height="5.600" rx="1.300" fill="#fff"/><path d="M10.200 7.300l3.000-2.000v5.400l-3.000-2.000z" fill="#fff"/></svg>
<!-- tray -->
<svg style="left:1048px;top:5px" width="23" height="23" viewBox="0 0 23 23"><circle cx="10.500" cy="11" r="10.000" fill="#1c8be0" stroke="#e8f2fb" stroke-width="1.300"/><text x="10.500" y="17.000" font-size="17" font-weight="bold" text-anchor="middle" fill="#fff" font-family="Liberation Sans,sans-serif">?</text><circle cx="18.500" cy="18.000" r="3.800" fill="#3ba0ee" stroke="#e8f2fb" stroke-width=".8"/><rect x="18.000" y="16.000" width="1.000" height="1.000" fill="#fff"/><rect x="18.000" y="17.600" width="1.000" height="2.400" fill="#fff"/></svg>
<svg style="left:1084px;top:12px" width="13" height="8" viewBox="0 0 13 8"><path d="M.8 7.200l5.700-6.000 5.700 6.000" fill="none" stroke="#fff" stroke-width="1.300"/></svg>
<svg style="left:1115px;top:8px" width="15" height="16" viewBox="0 0 15 16" fill="none" stroke="#e9e2e4" stroke-width="1.100"><rect x="1.000" y="4.000" width="8.600" height="8.000" rx="1.500"/><path d="M9.600 7.000l3.600-2.000v6.000l-3.600-2.000M3.000 1.500c2.000-1.200 4.500-1.200 6.500 0M3.000 14.500c2.000 1.200 4.500 1.200 6.500 0"/></svg>
<svg style="left:1146px;top:7px" width="12" height="18" viewBox="0 0 12 18"><rect x="3.200" y=".5" width="5.600" height="11.000" rx="2.800" fill="#fff"/><path d="M1.000 8.500c0 3.000 2.000 5.000 5.000 5.000s5.000-2.000 5.000-5.000M6.000 13.500v3.500" fill="none" stroke="#fff" stroke-width="1.200"/></svg>
<svg style="left:1175px;top:10px" width="18" height="12" viewBox="0 0 18 12"><rect x="3.200" y="2.800" width="13.400" height="7.000" fill="#e9dfe2" stroke="#fff" stroke-width="1.200"/><rect x="16.800" y="4.800" width="1.200" height="3.000" fill="#fff"/><circle cx="1.800" cy="1.800" r="1.300" fill="none" stroke="#fff" stroke-width="1"/><path d="M2.600 2.600l1.400 1.200" stroke="#fff" stroke-width="1.100"/></svg>
<svg style="left:1208px;top:9px" width="16" height="15" viewBox="0 0 16 15" fill="none" stroke="#d9d0d3" stroke-width="1.100"><path d="M1.000 9.000C3.000 3.000 9.000.5 15.000 1.500M4.000 11.000c1.500-4.500 5.500-6.500 10.000-6.000M7.000 13.000c1.000-3.000 3.500-4.500 6.500-4.200"/><circle cx="11.500" cy="12.500" r="1.300" fill="#d9d0d3" stroke="none"/></svg>
<svg style="left:1238px;top:10px" width="17" height="13" viewBox="0 0 17 13" fill="none" stroke="#fff" stroke-width="1.100"><path d="M1.000 4.500h2.600l3.400-3.000v10.000L3.600 8.500H1.000z"/><path d="M10.500 4.000l5.000 5.000M15.500 4.000l-5.000 5.000"/></svg>
<svg style="left:1269px;top:7px" width="18" height="17" viewBox="0 0 18 17" fill="none" stroke="#fff" stroke-width="1.200"><path d="M2.000 15.000c-2.000-3.000 1.000-6.000 4.000-6.500 4.000-.7 9.000-1.000 11.000-3.500M5.000 15.500C9.000 13.000 11.000 6.000 11.500 2.500c.3-2.000 2.500-2.000 2.600 0 .2 3.000-1.500 7.000-4.500 12.000"/></svg>
<svg style="left:1297px;top:9px" width="25" height="14" viewBox="0 0 25 14" fill="none" stroke="#fff"><rect x=".6" y=".6" width="23.800" height="12.800" rx="1" stroke-width="1.100"/><path d="M3.500 4.500h18.000M3.500 7.000h18.000" stroke-width="1.300" stroke-dasharray="1.500 1.500"/><path d="M6.000 10.200h13.000" stroke-width="1.300"/></svg>
<div class="abs" style="left:1327px;top:4px;width:16px;font-size:22px;line-height:24px;color:#f4eef0;text-align:center;font-family:'Liberation Sans',sans-serif">A</div>
<div class="abs" style="left:1356.500px;top:8px;width:15px;height:16px;background:#fff;border-radius:1px;color:#1a2228;font-size:13px;line-height:15px;text-align:center;font-weight:bold;font-family:'Noto Sans CJK KR','NanumGothic',sans-serif">한</div>
<div class="abs" style="left:1391px;top:9px;font-size:12px;line-height:14px;color:#fff;white-space:pre;font-family:'Liberation Sans','Noto Sans CJK KR',sans-serif">오후 3:10</div>
<svg style="left:1461px;top:8px" width="17" height="17" viewBox="0 0 17 17"><path d="M.8.800h15.400v11.800h-6.000L7.600 15.600V12.600H.8z" fill="#fff"/><path d="M3.400 4.000h10.200M3.400 6.500h10.200M3.400 9.000h10.200" stroke="#5a6268" stroke-width=".9"/></svg>
<div class="abs" style="left:1495px;top:2px;width:1px;height:28px;background:#5d666c"></div>
</div>
<div id="zoom" class="abs">
<div class="abs" style="left:-1px;top:0;width:397px;height:970px">
<svg class="abs" style="left:25px;top:23px" width="12" height="8" viewBox="0 0 12 8"><path d="M1.200 1.200l4.800 4.800 4.800-4.800" fill="none" stroke="#555a66" stroke-width="1.600"/></svg>
<div class="z hd" style="left:101px;top:17.500px">참가자<span class="la">(25)</span></div>
<div class="abs" style="left:30px;top:61px;width:343px;height:31px;background:#f2f2f7;border-radius:8px"></div>
<div class="abs" style="left:202px;top:63px;width:169px;height:27px;background:#fff;border-radius:7px;box-shadow:0 0 2px rgba(0,0,0,.08)"></div>
<div class="z" style="left:65px;top:70.500px;width:100px;text-align:center;font-size:15.500px;color:#444b53">토론자<b style="font-size:14px">(6)</b></div>
<div class="z" style="left:237px;top:70.500px;width:100px;text-align:center;font-size:15.500px;color:#0e72ed;font-weight:bold">참석자<span style="font-size:14px">(19)</span></div>
<div class="abs" style="left:25px;top:104px;width:355px;height:40px;border:1px solid #a9a9c6;border-radius:9px;background:#fff"></div>
<svg class="abs" style="left:39px;top:116px" width="17" height="17" viewBox="0 0 17 17" fill="none" stroke="#6e7680" stroke-width="1.500"><circle cx="7.000" cy="7.000" r="5.600"/><path d="M11.200 11.200l4.600 4.600"/></svg>
<div class="z" style="left:60px;top:115.500px;font-size:17.100px;color:#6e7680">검색</div>
<div class="abs" style="left:37px;top:163px;width:33px;height:33px;border-radius:8px;background:#2f4158;color:#fff;font-size:15.500px;font-weight:bold;line-height:36px;text-align:center">최</div>
<div class="abs" style="left:37px;top:214px;width:33px;height:33px;border-radius:8px;background:#f09a14;color:#fff;font-size:15.500px;font-weight:bold;line-height:36px;text-align:center">황</div>
<div class="abs" style="left:388px;top:147px;width:9px;height:110px;background:#f5f5f8;border-radius:5px 0 0 5px"></div>
<div class="abs" style="left:388px;top:245px;width:9px;height:12px;background:#8b8b93;border-radius:5px"></div>
<div class="abs" style="left:143px;top:279px;width:117px;height:29px;background:#f2f2f7;border-radius:8px;color:#b6b6c3;font-size:15.900px;line-height:28px;text-align:center;white-space:pre">모든 손 내리기</div>
<div class="abs" style="left:27px;top:326px;width:370px;height:1px;background:#e6e6ec"></div>
<svg class="abs" style="left:25px;top:351px" width="12" height="8" viewBox="0 0 12 8"><path d="M1.200 1.200l4.800 4.800 4.800-4.800" fill="none" stroke="#555a66" stroke-width="1.600"/></svg>
<div class="z hd" style="left:101px;top:346px;font-size:16.300px">채팅</div>
<div class="abs" style="left:0;top:384px;width:397px;height:342px;overflow:hidden">
<div class="z snd" style="top:-9.8px">발신자<b><span class="la">Maso-TA002</span></b>수신자<b>모든 토론자 및 참석자</b><span class="la">:</span></div>
<div class="z msg" style="top:15.8px"><span class="la">.reindex(</span>새 인덱스<span class="la">,</span> 새 컬럼<span class="la">) :</span> 데이터의</div>
<div class="z msg" style="top:49.4px">인덱스와 컬럼 재설정</div>
<div class="z msg" style="top:83.4px"><span class="la">NaN :</span> 결측치 <span class="la">(missing value)</span></div>
<div class="z msg" style="top:116.0px"><span class="la">.dropna() :</span> 결측치 없애는 함수</div>
<div class="z snd" style="top:164.3px">발신자<b><span class="la">Maso-TA002</span></b>수신자<b>모든 토론자 및 참석자</b><span class="la">:</span></div>
<div class="z msg" style="top:188.5px"><span class="la">.isnull() :</span> 값이 있을때 <span class="la">True</span>를 반환하는</div>
<div class="z msg" style="top:221.8px">함수</div>
<div class="z snd" style="top:268.2px">발신자<b><span class="la">Maso-TA002</span></b>수신자<b>모든 토론자 및 참석자</b><span class="la">:</span></div>
<div class="z msg" style="top:293.6px"><span class="la">.mean() :</span> 평균값 반환하는 함수</div>
<div class="abs" style="left:388px;top:1px;width:9px;height:341px;background:#f5f5f8;border-radius:5px 0 0 0"></div>
<div class="abs" style="left:388px;top:311px;width:9px;height:27px;background:#8b8b93;border-radius:5px"></div>
</div>
<div class="abs" style="left:1px;top:726px;width:396px;height:1px;background:#e6e6ec"></div>
<div class="z" style="left:22.500px;top:749px;font-size:15.800px;color:#232333">받는 사람<span style="font-size:14px">:</span></div>
<div class="abs" style="left:100px;top:743px;width:172px;height:29px;background:#f2f2f7;border-radius:8px"></div>
<div class="z" style="left:109.500px;top:749px;font-size:15px;color:#232333">모든 토론자 및 참석자</div>
<svg class="abs" style="left:251px;top:752px" width="11" height="8" viewBox="0 0 11 8"><path d="M1.200 1.500l4.300 4.300 4.300-4.300" fill="none" stroke="#232333" stroke-width="1.800"/></svg>
<div class="abs" style="left:352px;top:741px;width:30px;height:29px;border:1px solid #dcdce6;border-radius:8px;background:#fff"></div>
<div class="abs" style="left:360.500px;top:755px;width:2.400px;height:2.400px;background:#4d5260;border-radius:1.200px;box-shadow:5.300px 0 0 #4d5260,10.600px 0 0 #4d5260"></div>
<div class="z" style="left:22.500px;top:783.500px;font-size:16.900px;color:#84849a">여기에 메시지 입력<span style="font-size:15px">...</span></div>
</div></div>
</body>
</html>
